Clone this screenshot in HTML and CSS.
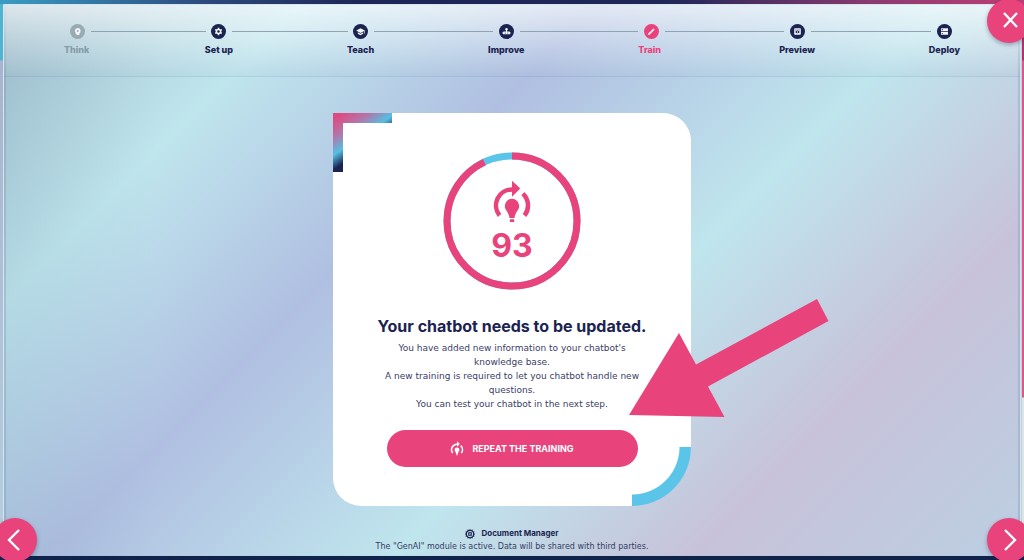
FILE: index.html
```html
<!DOCTYPE html>
<html lang="en">
<head>
    <meta charset="utf-8">
    <title>Train</title>
    <link rel="stylesheet" href="styles.css">
</head>

<body>
<svg class="sprite" aria-hidden="true">
    <symbol id="repeat" viewBox="0 0 40 44">
        <path d="M7.5 35.5A16 16 0 0 1 20 9.5M30.8 13.7A16 16 0 0 1 32.5 35.5" fill="none" stroke="currentColor" stroke-width="4.500"/>
        <path d="M20 0.7L28.3 8.5L20 16.7Z" fill="currentColor"/>
        <path d="M20 18.8a7.2 7.2 0 0 1 7.2 7.2c0 4.200-3.800 5.400-4.700 12h-5c-.9-6.600-4.700-7.800-4.700-12a7.200 7.200 0 0 1 7.200-7.200zM17.800 39.200h4.400v2.800h-4.400z" fill="currentColor"/>
    </symbol>
</svg>

<div class="panel">
    <nav class="header">
        <ol class="steps">
            <li class="step muted">
                <span class="marker"><svg viewBox="0 0 15 15"><circle cx="7.500" cy="7.500" r="7.500"/><path class="glyph" d="M7.600 4a3 3 0 0 1 3 3c0 1.200-.5 1.900-1.200 2.400V11H6.600V9.900H5.700V8.500L4.900 8.200 5 6.300A2.800 2.800 0 0 1 7.600 4z"/><circle cx="7.700" cy="6.900" r="1"/></svg></span>
                Think
            </li>
            <li class="line"></li>
            <li class="step">
                <span class="marker"><svg viewBox="0 0 15 15"><circle cx="7.500" cy="7.500" r="7.500"/><circle class="glyph" cx="7.500" cy="7.500" r="2.800"/><path class="spokes" d="M7.500 3.700V11.300M4.200 5.600L10.800 9.400M4.200 9.400L10.800 5.600"/><circle cx="7.500" cy="7.500" r="1.300"/></svg></span>
                Set up
            </li>
            <li class="line"></li>
            <li class="step">
                <span class="marker"><svg viewBox="0 0 15 15"><circle cx="7.500" cy="7.500" r="7.500"/><path class="glyph" d="M3.200 6.500L7.500 4.200L11.800 6.500V9.500H11.200V7L7.500 8.900ZM4.800 8.200L7.500 9.700L10.200 8.200V9.700L7.500 11.200L4.800 9.700Z"/></svg></span>
                Teach
            </li>
            <li class="line"></li>
            <li class="step">
                <span class="marker"><svg viewBox="0 0 15 15"><circle cx="7.500" cy="7.500" r="7.500"/><circle class="glyph" cx="7.500" cy="5.300" r="1.200"/><path class="glyph" d="M7 6h1v1.500h1.600a1.500 1.500 0 0 1 1.200 2.700H4.200a1.500 1.500 0 0 1 1.200-2.700H7z"/><circle cx="6.200" cy="8.900" r=".5"/><circle cx="8.800" cy="8.900" r=".5"/></svg></span>
                Improve
            </li>
            <li class="line"></li>
            <li class="step active" aria-current="step">
                <span class="marker"><svg viewBox="0 0 15 15"><circle cx="7.500" cy="7.500" r="7.500"/><path class="glyph" d="M4.300 9.600L9.400 4.500L10.600 5.700L5.500 10.800L4 11.100Z"/></svg></span>
                Train
            </li>
            <li class="line"></li>
            <li class="step">
                <span class="marker"><svg viewBox="0 0 15 15"><circle cx="7.500" cy="7.500" r="7.500"/><rect class="glyph" x="4.200" y="4.200" width="6.600" height="6.600" rx=".7"/><path d="M5 5.700h5v.5H5zM5.200 8c1.100-1.600 3.500-1.600 4.600 0c-1.100 1.600-3.500 1.600-4.600 0z"/><circle class="glyph" cx="7.500" cy="8" r=".7"/></svg></span>
                Preview
            </li>
            <li class="line"></li>
            <li class="step">
                <span class="marker"><svg viewBox="0 0 15 15"><circle cx="7.500" cy="7.500" r="7.500"/><path class="glyph" d="M4 4.300h7v2.900H4zM4 7.900h7v2.900H4z"/><path d="M4.700 5.300h1.200v.9H4.700zM4.700 8.900h1.200v.9H4.700z"/></svg></span>
                Deploy
            </li>
        </ol>
    </nav>

    <main class="content">
        <section class="card">
            <div class="gauge">
                <svg class="ring" viewBox="0 0 138 138" aria-hidden="true">
                    <circle class="rest" cx="69" cy="69" r="65"/>
                    <circle class="done" cx="69" cy="69" r="65" pathLength="100" stroke-dasharray="93 7" transform="rotate(-90 69 69)"/>
                </svg>
                <svg class="gauge-icon"><use href="#repeat"/></svg>
                <span class="score">93</span>
            </div>
            <h1>Your chatbot needs to be updated.</h1>
            <p>
                You have added new information to your chatbot's knowledge base.<br>
                A new training is required to let you chatbot handle new questions.<br>
                You can test your chatbot in the next step.
            </p>
            <button class="repeat" type="button">
                <svg><use href="#repeat"/></svg>
                REPEAT THE TRAINING
            </button>
            <svg class="pointer" viewBox="0 0 200 119" aria-hidden="true">
                <path d="M0 116L50 34L67 65.500L188 0L199.500 22L79 87.500L95.500 118Z"/>
            </svg>
        </section>
    </main>

    <footer class="footer">
        <a href="#">
            <svg viewBox="0 0 10 10"><path d="M5 0V10M0 5H10M2.800 .5V9.500M7.200 .5V9.500M.5 2.800H9.500M.5 7.200H9.500" stroke="#1b2350" stroke-width=".7"/><circle cx="5" cy="5" r="3.700" fill="#c0dde8" stroke="#1b2350" stroke-width="1.300"/><path d="M3.200 3.200h3.600v3.600H3.200z" fill="#1b2350"/><path d="M4.300 4.300h1.400v1.400H4.300z" fill="#c0dde8"/></svg>
            Document Manager
        </a>
        <span>The "GenAI" module is active. Data will be shared with third parties.</span>
    </footer>
</div>

<button class="round close" type="button" aria-label="Close"><svg viewBox="0 0 44 44"><path d="M17 14L30 28M30 14L17 28"/></svg></button>
<button class="round prev" type="button" aria-label="Previous"><svg viewBox="0 0 44 44"><path d="M26 12L16 22L26 32"/></svg></button>
<button class="round next" type="button" aria-label="Next"><svg viewBox="0 0 44 44"><path d="M18 12L28 22L18 32"/></svg></button>
</body>
</html>
```

FILE: styles.css
```css
*{
    margin: 0;
    padding: 0;
    box-sizing: border-box;
}
body{
    min-height: 100vh;
    padding: 4px 3px;
    display: flex;
    position: relative;
    overflow: hidden;
    font-family: Inter, "Liberation Sans", sans-serif;
    color: #1b2350;
    background:
        linear-gradient(90deg, #3a9cc4, #2c4a7c 20%, #1e2657 35%, #1e2657 65%, #8a3a70 85%, #c03e77) top / 100% 4px no-repeat,
        linear-gradient(#10234a, #10234a) bottom / 100% 4px no-repeat,
        linear-gradient(#4fb4d2 60px, #a9b3cf 61px, #b4cfe0) left / 3px 100% no-repeat,
        linear-gradient(#b82f6c 60px, #e2548a 61px, #e2548a 397px, #dbe6e4 398px) right / 2px 100% no-repeat,
        #c3cfe0;
}
.sprite{
    position: absolute;
    width: 0;
    height: 0;
}
.panel{
    flex: 1;
    display: flex;
    flex-direction: column;
    border: 1px solid #d5e6ee;
    border-bottom: 0;
    border-radius: 3px 3px 0 0;
    box-shadow: inset 2px 0 1px rgba(110, 140, 165, 0.3), inset -2px 0 1px rgba(110, 140, 165, 0.3);
    background:
        linear-gradient(90deg, rgba(95, 135, 160, 0.12), transparent 15%),
        linear-gradient(135deg, #a4c0ce 0%, #bfe5ed 19%, #b0bfe1 38%, #bfe5ed 60%, #c7c2da 79%, #bccfe2 100%);
}
.header{
    height: 72px;
    padding: 19px 60px 0;
    border-bottom: 1px solid rgba(100, 135, 165, 0.2);
    background: linear-gradient(rgba(255, 255, 255, 0.65), rgba(255, 255, 255, 0.3) 50%, rgba(150, 175, 200, 0.1)) padding-box;
}
.steps{
    display: flex;
    list-style: none;
}
.step{
    display: flex;
    flex-direction: column;
    gap: 5px;
    font-size: 9px;
    line-height: 12px;
    font-weight: 800;
}
.line{
    flex: 1;
    height: 1px;
    margin-top: 7px;
    background: #8fa4b3;
}
.marker{
    display: flex;
    align-items: center;
    justify-content: center;
    gap: 6px;
}
.marker::before, .marker::after{
    content: "";
    flex: 1;
    height: 1px;
    background: #8fa4b3;
}
.step:first-child .marker::before, .step:last-child .marker::after{
    background: none;
}
.marker svg{
    flex: none;
    width: 15px;
    height: 15px;
    fill: #1b2350;
}
.marker .glyph{
    fill: #f2f6fa;
}
.spokes{
    stroke: #f2f6fa;
    stroke-width: 1.6;
}
.muted{
    color: #839ca8;
}
.muted svg{
    fill: #98abb2;
}
.active{
    color: #e9437c;
}
.active svg{
    fill: #e9437c;
}
.content{
    display: flex;
    justify-content: center;
    padding-top: 36px;
}
.card{
    position: relative;
    width: 358px;
    padding: 39px 46px;
    display: flex;
    flex-direction: column;
    align-items: center;
    text-align: center;
    background: #fff;
    border-radius: 0 28px 62px 28px;
}
.card::before{
    content: "";
    position: absolute;
    left: 0;
    top: 0;
    width: 59px;
    height: 59px;
    background: linear-gradient(146deg, #e0487f 5%, #b574a8 25%, #55bfe2 43%, #1b2350 58%);
    clip-path: polygon(0 0, 100% 0, 100% 10px, 10px 10px, 10px 100%, 0 100%);
}
.card::after{
    content: "";
    position: absolute;
    right: 0;
    bottom: 0;
    width: 59px;
    height: 59px;
    border-radius: 0 0 59px 0;
    background: radial-gradient(circle at 0 0, transparent 47px, #5bc5e9 48px);
}
.gauge{
    position: relative;
    width: 138px;
    height: 138px;
    padding-top: 28px;
    display: flex;
    flex-direction: column;
    align-items: center;
}
.ring{
    position: absolute;
    inset: 0;
    fill: none;
    stroke-width: 7;
}
.rest{
    stroke: #5bc5e9;
}
.done{
    stroke: #e9437c;
}
.gauge-icon{
    width: 40px;
    height: 44px;
    color: #e9437c;
}
.score{
    font-size: 32px;
    line-height: 44px;
    font-weight: 700;
    color: #e9437c;
}
h1{
    margin-top: 26px;
    font-size: 16px;
    line-height: 20px;
    font-weight: 700;
    white-space: nowrap;
}
p{
    margin-top: 5px;
    font-family: "DejaVu Sans", sans-serif;
    font-size: 9px;
    line-height: 14px;
    color: #3a4068;
}
.repeat{
    width: 251px;
    height: 37px;
    margin-top: 19px;
    display: flex;
    align-items: center;
    justify-content: center;
    gap: 8px;
    border: 0;
    border-radius: 19px;
    background: #e9437c;
    color: #fff;
    font-family: inherit;
    font-size: 9px;
    font-weight: 700;
    cursor: pointer;
}
.repeat svg{
    width: 14px;
    height: 15px;
}
.pointer{
    position: absolute;
    left: 296px;
    top: 186px;
    width: 200px;
    height: 119px;
    fill: #e9437c;
    z-index: 1;
}
.footer{
    margin-top: auto;
    padding-bottom: 3px;
    display: flex;
    flex-direction: column;
    align-items: center;
    font-family: "DejaVu Sans", sans-serif;
    font-size: 8px;
    line-height: 13px;
    color: #343d63;
}
.footer a{
    display: flex;
    align-items: center;
    gap: 6px;
    font-family: Inter, "Liberation Sans", sans-serif;
    font-weight: 700;
    color: #1b2350;
    text-decoration: none;
}
.footer svg{
    width: 10px;
    height: 10px;
}
.round{
    position: absolute;
    width: 44px;
    height: 44px;
    border: 0;
    border-radius: 50%;
    background: #e9437c;
    box-shadow: 0 2px 4px rgba(30, 40, 80, 0.35);
    cursor: pointer;
}
.round svg{
    display: block;
    fill: none;
    stroke: #fff;
    stroke-width: 2.4;
}
.close{
    right: -7px;
    top: -1px;
}
.prev{
    left: -7px;
    bottom: -2px;
}
.next{
    right: -7px;
    bottom: -2px;
}
```
